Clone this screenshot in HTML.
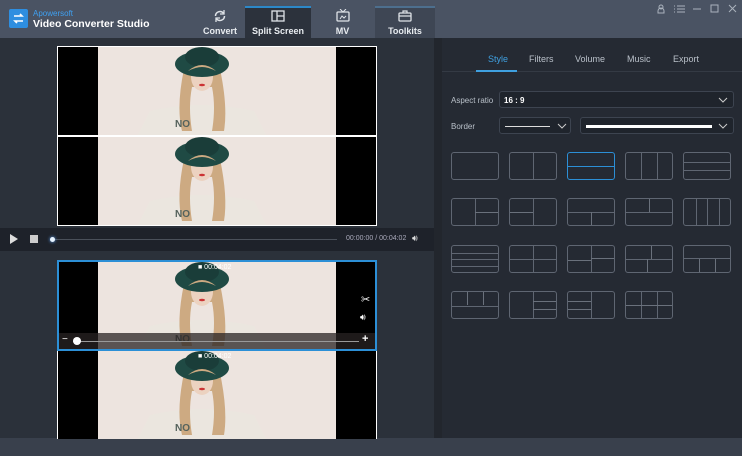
<!DOCTYPE html>
<html><head><meta charset="utf-8"><style>
*{margin:0;padding:0;box-sizing:border-box}
body{width:742px;height:456px;overflow:hidden;background:#2a3039;font-family:"Liberation Sans",sans-serif;position:relative}
.a{position:absolute}
.hdr{left:0;top:0;width:742px;height:38px;background:#4a5363}
.tab{top:6px;height:32px;color:#e8ecf0;font-size:9px;font-weight:bold;text-align:center}
.tab span{position:absolute;left:0;right:0;top:20px}
.clip{width:318px;height:88px}
.lt{border:1px solid #5f6672;border-radius:3px;width:48px;height:28px;position:absolute}
.lt i{position:absolute;background:#6a717c}
.tb{top:54px;font-size:9px;color:#b9c0c9}
.sel{border:1px solid #3d4450;background:#1f242c;border-radius:3px;position:absolute}
</style></head><body>
<div class="a hdr"></div>
<svg class="a" style="left:9px;top:9px" width="19" height="19"><rect width="19" height="19" rx="2" fill="#2e8ee0"/><path d="M5 7h8l-2-2M14 12H6l2 2" stroke="#fff" stroke-width="1.6" fill="none"/></svg>
<div class="a" style="left:33px;top:9px;font-size:8px;color:#3fa0f0">Apowersoft</div>
<div class="a" style="left:33px;top:18px;font-size:10.5px;font-weight:bold;color:#fff">Video Converter Studio</div>
<div class="a tab" style="left:196px;width:48px"><svg class="a" style="left:17px;top:3px" width="14" height="14"><path d="M2.5 7a4.5 4.5 0 0 1 8-2.8M11.5 7a4.5 4.5 0 0 1-8 2.8" stroke="#dfe3e8" stroke-width="1.5" fill="none"/><path d="M11 1v4h-4M3 13V9h4" stroke="#dfe3e8" stroke-width="1.3" fill="none"/></svg><span>Convert</span></div>
<div class="a tab" style="left:245px;width:66px;background:#2c323c;border-top:2px solid #2c88c8"><svg class="a" style="left:26px;top:2px" width="14" height="12"><rect x="1" y="1" width="12" height="10" stroke="#dfe3e8" fill="none" stroke-width="1.3"/><path d="M6 1v10M6 6h7" stroke="#dfe3e8" stroke-width="1.3"/></svg><span style="top:18px">Split Screen</span></div>
<div class="a tab" style="left:311px;width:63px"><svg class="a" style="left:25px;top:3px" width="14" height="13"><rect x="1" y="3" width="12" height="9" rx="1" stroke="#dfe3e8" fill="none" stroke-width="1.3"/><path d="M4 0l3 3 3-3M4 10l2-3 2 2 2-2" stroke="#dfe3e8" stroke-width="1" fill="none"/></svg><span>MV</span></div>
<div class="a tab" style="left:375px;width:60px;background:#3e4654;border-top:2px solid #4d6f8e"><svg class="a" style="left:23px;top:2px" width="14" height="12"><rect x="1" y="3" width="12" height="8" rx="1" stroke="#dfe3e8" fill="none" stroke-width="1.3"/><path d="M5 3V1h4v2M1 6h12" stroke="#dfe3e8" stroke-width="1.2" fill="none"/></svg><span style="top:18px">Toolkits</span></div>
<svg class="a" style="left:655px;top:3px" width="85" height="12" stroke="#aab2bd" fill="none" stroke-width="1"><circle cx="6" cy="4" r="2"/><path d="M3 10h6V8a3 3 0 0 0-6 0z"/><path d="M22 3h8M22 6h8M22 9h8M19 3h1M19 6h1M19 9h1"/><path d="M38 6h8"/><rect x="56" y="2" width="7" height="7"/><path d="M74 2l7 7M81 2l-7 7"/></svg>
<div class="a" style="left:0;top:38px;width:434px;height:418px;background:#2b313a"></div>
<div class="a" style="left:434px;top:38px;width:8px;height:418px;background:#22262d"></div>
<div class="a" style="left:442px;top:38px;width:300px;height:418px;background:#252a33"></div>
<div class="a" style="left:0;top:438px;width:742px;height:18px;background:#39404c"></div>
<div class="a" style="left:57px;top:46px;width:320px;height:180px;background:#fff"></div>
<div class="a" style="left:0;top:228px;width:434px;height:23px;background:#1e222a"></div>
<svg class="a" style="left:9px;top:234px" width="10" height="10"><path d="M1 0l8 5-8 5z" fill="#ddd"/></svg>
<div class="a" style="left:30px;top:235px;width:8px;height:8px;background:#ccc"></div>
<div class="a" style="left:52px;top:239px;width:285px;height:1px;background:#4a505a"></div>
<div class="a" style="left:50px;top:237px;width:5px;height:5px;border-radius:50%;background:#e8f4ff;box-shadow:0 0 3px #6af"></div>
<div class="a" style="left:346px;top:235px;font-size:7px;color:#aab">00:00:00 / 00:04:02</div>
<div class="a" style="left:412px;top:233px;font-size:9px;color:#ddd">🔊︎</div>
<div class="a" style="left:57px;top:260px;width:320px;height:179px;background:#fff"></div>
<div class="a" style="left:57px;top:260px;width:320px;height:91px;border:2px solid #2c8fd6;z-index:5"></div>
<div id="clips"></div>
<div class="a tb" style="left:488px;color:#3fa0e0">Style</div>
<div class="a tb" style="left:529px">Filters</div>
<div class="a tb" style="left:575px">Volume</div>
<div class="a tb" style="left:627px">Music</div>
<div class="a tb" style="left:673px">Export</div>
<div class="a" style="left:442px;top:71px;width:300px;height:1px;background:#343a44"></div>
<div class="a" style="left:476px;top:70px;width:41px;height:2px;background:#3fa0e0"></div>
<div class="a" style="left:451px;top:96px;font-size:8px;color:#b9c0c9">Aspect ratio</div>
<div class="sel" style="left:499px;top:91px;width:235px;height:17px"><span class="a" style="left:4px;top:4px;font-size:8px;color:#fff;font-weight:bold">16 : 9</span><svg class="a" style="left:218px;top:5px" width="10" height="6"><path d="M1 1l4 4 4-4" stroke="#ccc" fill="none"/></svg></div>
<div class="a" style="left:451px;top:122px;font-size:8px;color:#b9c0c9">Border</div>
<div class="sel" style="left:499px;top:117px;width:72px;height:17px"><div class="a" style="left:5px;top:8px;width:45px;height:1px;background:#ddd"></div><svg class="a" style="left:57px;top:5px" width="10" height="6"><path d="M1 1l4 4 4-4" stroke="#ccc" fill="none"/></svg></div>
<div class="sel" style="left:580px;top:117px;width:154px;height:17px"><div class="a" style="left:5px;top:7px;width:126px;height:3px;background:#fff"></div><svg class="a" style="left:137px;top:5px" width="10" height="6"><path d="M1 1l4 4 4-4" stroke="#ccc" fill="none"/></svg></div>
<div id="lts"></div>
<script>
function clip(x,y){return `<svg class="a clip" style="left:${x}px;top:${y}px" width="318" height="88" viewBox="0 0 318 88">
<rect width="318" height="88" fill="#ede4df"/><rect width="40" height="88" fill="#000"/><rect x="278" width="40" height="88" fill="#000"/>
<path d="M80 88 L92 64 Q143 52 196 64 L208 88Z" fill="#ebe6df"/>
<path d="M126 22 Q118 60 124 84 L134 84 Q130 60 134 40 L154 40 Q158 60 154 84 L166 84 Q170 60 162 22Z" fill="#cdaa82"/>
<ellipse cx="144" cy="30" rx="11" ry="14" fill="#ecd2c0"/>
<path d="M133 24 Q144 14 156 24 L156 18 L133 18Z" fill="#d4b48c"/>
<ellipse cx="144" cy="17" rx="27" ry="13" fill="#1f4a44"/><ellipse cx="144" cy="10" rx="17" ry="10" fill="#1a3d39"/>
<path d="M130 24 Q144 12 158 24 Q150 20 144 20 Q138 20 130 24Z" fill="#cdaa82"/>
<ellipse cx="144" cy="38" rx="3" ry="1.3" fill="#c33"/>
<text x="117" y="80" font-size="10" font-weight="bold" fill="#55625c" font-family="Liberation Sans">NO</text></svg>`}
document.getElementById('clips').outerHTML=clip(58,47)+clip(58,137)+clip(58,262)+clip(58,351);
const L=[
[],[['v',.5]],[['h',.5]],[['v',.33],['v',.67]],[['h',.33],['h',.67]],
[['v',.5],['hr',.5]],[['v',.5],['hl',.5]],[['h',.5],['vb',.5]],[['h',.5],['vt',.5]],[['v',.25],['v',.5],['v',.75]],
[['h',.25],['h',.5],['h',.75]],[['v',.5],['h',.5]],[['v',.5],['hl',.55],['hr',.45]],[['h',.5],['vt',.55],['vb',.45]],[['h',.45],['vb',.33],['vb',.67]],
[['h',.55],['vt',.33],['vt',.67]],[['v',.5],['hr',.33],['hr',.67]],[['v',.5],['hl',.33],['hl',.67]],[['v',.33],['v',.67],['hl',.5],['hr',.5]]];
const xs=[451,509,567,625,683],ys=[152,198,245,291];let o='';
L.forEach((l,i)=>{const x=xs[i%5],y=ys[Math.floor(i/5)];let c=i==2?'#2c8fd6':'#5f6672';let s='';
l.forEach(([t,p])=>{const pc=p*100;
if(t=='v')s+=`<i style="left:${pc}%;top:0;bottom:0;width:1px;background:${c}"></i>`;
if(t=='h')s+=`<i style="top:${pc}%;left:0;right:0;height:1px;background:${c}"></i>`;
if(t=='hr')s+=`<i style="top:${pc}%;left:50%;right:0;height:1px"></i>`;
if(t=='hl')s+=`<i style="top:${pc}%;left:0;right:50%;height:1px"></i>`;
if(t=='vb')s+=`<i style="left:${pc}%;top:50%;bottom:0;width:1px"></i>`;
if(t=='vt')s+=`<i style="left:${pc}%;top:0;bottom:50%;width:1px"></i>`;});
o+=`<div class="lt" style="left:${x}px;top:${y}px;border-color:${c}">${s}</div>`;});
document.getElementById('lts').outerHTML=o;
</script>
<div class="a" style="left:59px;top:333px;width:316px;height:16px;background:rgba(40,35,35,.75);z-index:4"></div>
<div class="a" style="left:73px;top:341px;width:286px;height:1px;background:#999;z-index:4"></div>
<div class="a" style="left:73px;top:337px;width:8px;height:8px;border-radius:50%;background:#fff;z-index:4"></div>
<div class="a" style="left:62px;top:334px;color:#fff;font-size:10px;z-index:4">−</div>
<div class="a" style="left:362px;top:333px;color:#fff;font-size:11px;font-weight:bold;z-index:4">+</div>
<div class="a" style="left:361px;top:293px;color:#fff;font-size:11px;z-index:4">✂</div>
<div class="a" style="left:360px;top:312px;color:#fff;font-size:9px;z-index:4">🔊︎</div>
<div class="a" style="left:198px;top:264px;color:#fff;font-size:7px;z-index:4">■ 00:04:02</div>
<div class="a" style="left:198px;top:353px;color:#fff;font-size:7px;z-index:4">■ 00:04:02</div>
</body></html>
